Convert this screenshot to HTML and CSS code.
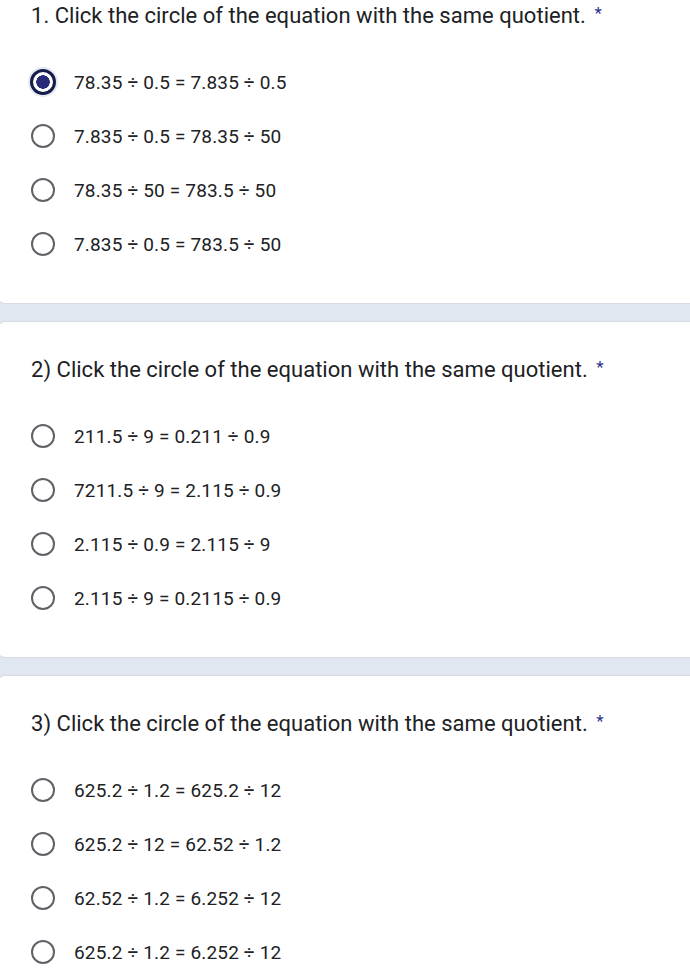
FILE: index.html
```html
<!DOCTYPE html>
<html lang="en">
<head>
<meta charset="utf-8">
<title>Quotient Quiz</title>
<link rel="stylesheet" href="styles.css">
</head>
<body>
<div class="page">
  <!-- Question 1 (top of card is scrolled off) -->
  <div class="card first">
    <div class="question">1. Click the circle of the equation with the same quotient. <span class="req">*</span></div>
    <div class="options">
      <label class="option"><span class="radio checked"></span>78.35 ÷ 0.5 = 7.835 ÷ 0.5</label>
      <label class="option"><span class="radio"></span>7.835 ÷ 0.5 = 78.35 ÷ 50</label>
      <label class="option"><span class="radio"></span>78.35 ÷ 50 = 783.5 ÷ 50</label>
      <label class="option"><span class="radio"></span>7.835 ÷ 0.5 = 783.5 ÷ 50</label>
    </div>
  </div>
  <!-- Question 2 -->
  <div class="card">
    <div class="question">2) Click the circle of the equation with the same quotient. <span class="req">*</span></div>
    <div class="options">
      <label class="option"><span class="radio"></span>211.5 ÷ 9 = 0.211 ÷ 0.9</label>
      <label class="option"><span class="radio"></span>7211.5 ÷ 9 = 2.115 ÷ 0.9</label>
      <label class="option"><span class="radio"></span>2.115 ÷ 0.9 = 2.115 ÷ 9</label>
      <label class="option"><span class="radio"></span>2.115 ÷ 9 = 0.2115 ÷ 0.9</label>
    </div>
  </div>
  <!-- Question 3 -->
  <div class="card">
    <div class="question">3) Click the circle of the equation with the same quotient. <span class="req">*</span></div>
    <div class="options">
      <label class="option"><span class="radio"></span>625.2 ÷ 1.2 = 625.2 ÷ 12</label>
      <label class="option"><span class="radio"></span>625.2 ÷ 12 = 62.52 ÷ 1.2</label>
      <label class="option"><span class="radio"></span>62.52 ÷ 1.2 = 6.252 ÷ 12</label>
      <label class="option"><span class="radio"></span>625.2 ÷ 1.2 = 6.252 ÷ 12</label>
    </div>
  </div>
</div>
</body>
</html>
```

FILE: styles.css
```css
  body {
    margin: 0;
    background-color: #e1e7f0;
    font-family: Roboto, "Liberation Sans", sans-serif;
    color: #202124;
    overflow: hidden;
  }
  .page {
    display: flex;
    flex-direction: column;
    gap: 17px;
    margin-left: -3px;
    margin-right: -20px;
  }
  .card {
    background-color: #fff;
    border: 1px solid #d6dbe3;
    border-radius: 8px;
    padding: 32px 0 32px 33px;
  }
  .card.first {
    border-top: none;
    border-radius: 0 0 8px 8px;
    padding-top: 0;
  }
  .question {
    font-size: 22px;
    line-height: 26px;
    height: 26px;
    letter-spacing: 0.02px;
  }
  .req {
    color: #2c2f8f;
    font-size: 17px;
    vertical-align: 4px;
    margin-left: 3px;
  }
  .options {
    margin-top: 29px;
    display: flex;
    flex-direction: column;
  }
  .option {
    display: flex;
    align-items: center;
    height: 54px;
    font-size: 19px;
    letter-spacing: 0.16px;
    color: #202124;
  }
  .radio {
    box-sizing: border-box;
    width: 24px;
    height: 24px;
    border: 2.5px solid #5f6368;
    border-radius: 50%;
    margin-right: 19px;
    flex-shrink: 0;
  }
  .radio.checked {
    width: 26px;
    height: 26px;
    margin-left: -1px;
    margin-right: 18px;
    border: 3px solid #151c4a;
    background: radial-gradient(circle, #2a2a78 0, #2a2a78 6.5px, #fff 7px);
    box-shadow: 0 0 0 2px #e6e9f2;
  }
```
